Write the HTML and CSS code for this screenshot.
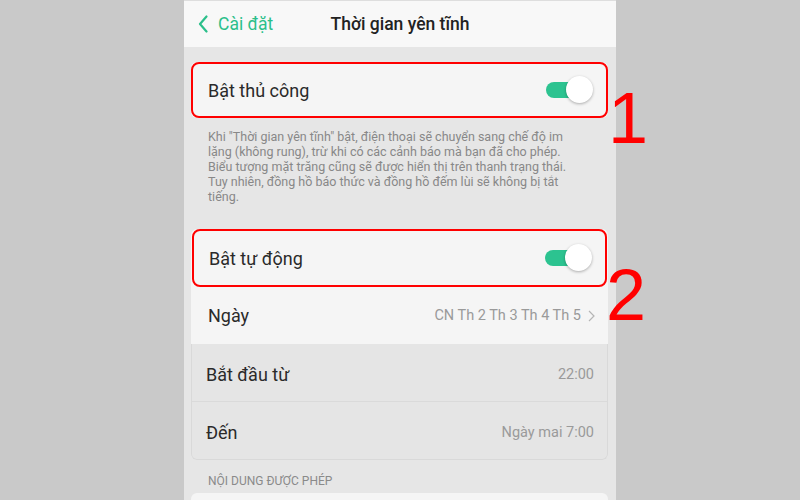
FILE: index.html
```html
<!DOCTYPE html>
<html lang="vi">
<head>
<meta charset="utf-8">
<link rel="stylesheet" href="styles.css">
</head>
<body>
<div class="screen">
  <header class="topbar">
    <div class="back">
      <svg class="chev" width="10" height="18" viewBox="0 0 10 18"><path d="M8.5 1.5 L2 9 L8.5 16.5" fill="none" stroke="#2bbf8a" stroke-width="2.2" stroke-linecap="round" stroke-linejoin="round"/></svg>
      <span>Cài đặt</span>
    </div>
    <div class="title">Thời gian yên tĩnh</div>
  </header>

  <main class="content">
    <div class="card single">
      <div class="row hl first">
        <span class="label">Bật thủ công</span>
        <span class="toggle"><span class="track"></span><span class="thumb"></span></span>
      </div>
    </div>

    <p class="desc">Khi "Thời gian yên tĩnh" bật, điện thoại sẽ chuyển sang chế độ im lặng (không rung), trừ khi có các cảnh báo mà bạn đã cho phép. Biểu tượng mặt trăng cũng sẽ được hiển thị trên thanh trạng thái. Tuy nhiên, đồng hồ báo thức và đồng hồ đếm lùi sẽ không bị tắt tiếng.</p>

    <div class="card group">
      <div class="row hl r58">
        <span class="label">Bật tự động</span>
        <span class="toggle"><span class="track"></span><span class="thumb"></span></span>
      </div>
      <div class="row r57">
        <span class="label">Ngày</span>
        <span class="value">CN Th 2 Th 3 Th 4 Th 5
          <svg class="arrow" width="7" height="12" viewBox="0 0 7 12"><path d="M1 1 L6 6 L1 11" fill="none" stroke="#b5b5b5" stroke-width="1.2"/></svg>
        </span>
      </div>
      <div class="sub">
        <div class="row r58 dim sep">
          <span class="label">Bắt đầu từ</span>
          <span class="value">22:00</span>
        </div>
        <div class="row r57 dim">
          <span class="label">Đến</span>
          <span class="value">Ngày mai 7:00</span>
        </div>
      </div>
    </div>

    <div class="section">NỘI DUNG ĐƯỢC PHÉP</div>
    <div class="card tail"></div>
  </main>

  <span class="mark m1">1</span>
  <span class="mark m2">2</span>
</div>
</body>
</html>
```

FILE: styles.css
```css
html, body {
  margin: 0;
  padding: 0;
  height: 100%;
  overflow: hidden;
}
body {
  background: #c9c9c9;
  font-family: Roboto, "Noto Sans", "Liberation Sans", sans-serif;
}
.screen {
  position: relative;
  width: 432px;
  height: 500px;
  margin: 0 auto;
  background: #e6e6e6;
}
.topbar {
  position: relative;
  height: 46px;
  background: #f8f8f8;
  border-top: 1px solid #dedede;
  display: flex;
  align-items: center;
  justify-content: center;
}
.back {
  position: absolute;
  left: 14px;
  top: 0;
  height: 46px;
  display: flex;
  align-items: center;
  gap: 10px;
  color: #2bbf8a;
  font-size: 17.5px;
}
.title {
  font-size: 17.5px;
  font-weight: 500;
  color: #222;
}
.content {
  padding: 15px 8px 0 7px;
}
.card {
  background: #f5f5f5;
  border-radius: 6px;
}
.row {
  display: flex;
  align-items: center;
  justify-content: space-between;
  padding: 0 15px 0 17px;
  box-sizing: border-box;
}
.first { height: 56px; }
.r58 { height: 58px; }
.r57 { height: 57px; }
.hl {
  outline: 2px solid #ff0000;
  outline-offset: -2px;
  border-radius: 8px;
}
.group .hl { margin: 0 1px 0 1px; }
.label {
  font-size: 18px;
  color: #2a2a2a;
}
.value {
  font-size: 14.5px;
  color: #9a9a9a;
  display: flex;
  align-items: center;
  gap: 7px;
}
.arrow { margin-right: -2px; }
.toggle {
  position: relative;
  width: 47px;
  height: 28px;
}
.track {
  position: absolute;
  left: 0;
  top: 6px;
  width: 36px;
  height: 16px;
  border-radius: 8px;
  background: #2cc390;
}
.thumb {
  position: absolute;
  right: 0;
  top: 0;
  width: 27px;
  height: 27px;
  border-radius: 50%;
  background: #fff;
  box-shadow: 0 1px 3px rgba(0,0,0,0.3);
}
.desc {
  margin: 11px 0 0 0;
  padding: 0 20px 0 17px;
  font-size: 12.5px;
  line-height: 15px;
  color: #888;
}
.group { margin-top: 25px; }
.sub {
  background: #e5e5e5;
  border: 1px solid #d9d9d9;
  border-top: none;
  border-radius: 0 0 6px 6px;
}
.dim { padding-left: 14px; padding-right: 13px; padding-top: 3px; }
.dim .label { font-size: 18px; }
.sep { border-bottom: 1px solid #dadada; }
.section {
  padding: 14px 0 0 17px;
  height: 19px;
  font-size: 12px;
  color: #8a8a8a;
}
.tail {
  height: 20px;
  border-radius: 6px 6px 0 0;
}
.mark {
  position: absolute;
  color: #ff0000;
  font-family: "Liberation Sans", Arial, sans-serif;
  font-size: 72px;
  line-height: 1;
}
.m1 { left: 424px; top: 82px; }
.m2 { left: 422px; top: 259px; }
```
